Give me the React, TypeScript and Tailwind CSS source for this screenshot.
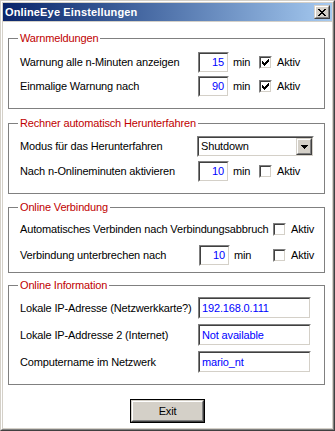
import React from "react";

function Sunken({ className = "", children }: { className?: string; children?: React.ReactNode }) {
  return (
    <div className={`flex border border-[#808080] border-r-white border-b-white ${className}`}>
      <div className="flex flex-1 items-center border border-[#404040] border-r-[#d4d0c8] border-b-[#d4d0c8] bg-white min-w-0">
        {children}
      </div>
    </div>
  );
}

function Raised({ className = "", children }: { className?: string; children?: React.ReactNode }) {
  return (
    <div className={`flex border border-[#d4d0c8] border-r-[#404040] border-b-[#404040] ${className}`}>
      <div className="flex flex-1 items-center justify-center border border-white border-r-[#808080] border-b-[#808080] bg-[#d4d0c8]">
        {children}
      </div>
    </div>
  );
}

function Check({ on }: { on?: boolean }) {
  return (
    <Sunken className="w-[13px] h-[13px] shrink-0">
      {on && (
        <svg width="7" height="7" viewBox="0 0 7 7" className="ml-[1px]" shapeRendering="crispEdges">
          <path
            fill="#000"
            d="M6 0h1v1H6z M5 1h2v1H5z M0 2h1v1H0z M4 2h3v1H4z M0 3h2v1H0z M3 3h3v1H3z M0 4h5v1H0z M1 5h3v1H1z M2 6h1v1H2z"
          />
        </svg>
      )}
    </Sunken>
  );
}

function Num({ v }: { v: string }) {
  return (
    <Sunken className="w-[31px] h-[21px] shrink-0">
      <span className="w-full text-right pr-[3px] text-[#0000ff]">{v}</span>
    </Sunken>
  );
}

function Group({ title, className = "", children }: { title: string; className?: string; children: React.ReactNode }) {
  return (
    <div className={`relative ml-[5px] w-[317px] border border-[#808080] flex flex-col pl-[11px] ${className}`}>
      <span className="absolute -top-[8px] left-[9px] bg-white px-[2px] leading-[14px] text-[#c00000]">{title}</span>
      {children}
    </div>
  );
}

function MinRow({ label, v, on, lw = "w-[178px]", mw = "w-[30px]" }: { label: string; v: string; on?: boolean; lw?: string; mw?: string }) {
  return (
    <div className="flex items-center h-[21px]">
      <span className={`${lw} shrink-0 whitespace-nowrap`}>{label}</span>
      <Num v={v} />
      <span className={`${mw} pl-[4px] shrink-0`}>min</span>
      <Check on={on} />
      <span className="pl-[5px]">Aktiv</span>
    </div>
  );
}

function Field({ label, v }: { label: string; v: string }) {
  return (
    <div className="flex items-center h-[22px]">
      <span className="w-[178px] shrink-0 whitespace-nowrap">{label}</span>
      <Sunken className="w-[113px] h-[22px]">
        <span className="pl-[2px] text-[#0000ff] whitespace-nowrap">{v}</span>
      </Sunken>
    </div>
  );
}

export default function App() {
  return (
    <div className="w-[335px] h-[431px] border border-[#d4d0c8] border-r-[#404040] border-b-[#404040] font-['Liberation_Sans',Arial,sans-serif] text-[11px] tracking-[-0.15px] text-black">
      <div className="h-full flex flex-col border border-white border-r-[#808080] border-b-[#808080] bg-[#d4d0c8] p-[1px]">
        <div className="h-[18px] shrink-0 flex items-center justify-between bg-linear-to-r from-[#0a246a] to-[#a6caf0] pl-[2px] pr-[2px]">
          <span className="text-white font-bold text-[11px] tracking-[0.15px] leading-none">OnlineEye Einstellungen</span>
          <Raised className="w-[16px] h-[14px]">
            <svg width="8" height="7" viewBox="0 0 8 7" shapeRendering="crispEdges">
              <path
                fill="#000"
                d="M0 0h2v1H0z M6 0h2v1H6z M1 1h2v1H1z M5 1h2v1H5z M2 2h4v1H2z M3 3h2v1H3z M2 4h4v1H2z M1 5h2v1H1z M5 5h2v1H5z M0 6h2v1H0z M6 6h2v1H6z"
              />
            </svg>
          </Raised>
        </div>
        <div className="mt-[1px] flex-1 bg-white flex flex-col">
          <Group title="Warnmeldungen" className="mt-[16px] h-[71px] pt-[13px] gap-[3px]">
            <MinRow label="Warnung alle n-Minuten anzeigen" v="15" on />
            <MinRow label="Einmalige Warnung nach" v="90" on />
          </Group>

          <Group title="Rechner automatisch Herunterfahren" className="mt-[14px] h-[71px] pt-[12px] gap-[4px]">
            <div className="flex items-center h-[21px]">
              <span className="w-[177px] shrink-0">Modus für das Herunterfahren</span>
              <Sunken className="w-[117px] h-[21px]">
                <span className="flex-1 pl-[2px]">Shutdown</span>
                <Raised className="w-[16px] h-full">
                  <svg width="7" height="4" viewBox="0 0 7 4" shapeRendering="crispEdges">
                    <path fill="#000" d="M0 0h7v1H0z M1 1h5v1H1z M2 2h3v1H2z M3 3h1v1H3z" />
                  </svg>
                </Raised>
              </Sunken>
            </div>
            <MinRow label="Nach n-Onlineminuten aktivieren" v="10" />
          </Group>

          <Group title="Online Verbindung" className="mt-[13px] h-[66px] pt-[11px] gap-[5px]">
            <div className="flex items-center h-[21px]">
              <span className="w-[253px] shrink-0 whitespace-nowrap">Automatisches Verbinden nach Verbindungsabbruch</span>
              <Check />
              <span className="pl-[5px]">Aktiv</span>
            </div>
            <MinRow label="Verbindung unterbrechen nach" v="10" lw="w-[179px]" mw="w-[43px]" />
          </Group>

          <Group title="Online Information" className="mt-[12px] h-[100px] pt-[11px] gap-[5px]">
            <Field label="Lokale IP-Adresse (Netzwerkkarte?)" v="192.168.0.111" />
            <Field label="Lokale IP-Addresse 2 (Internet)" v="Not available" />
            <Field label="Computername im Netzwerk" v="mario_nt" />
          </Group>

          <div className="mt-[14px] flex justify-center">
            <div className="w-[75px] h-[24px] border border-black flex">
              <Raised className="flex-1">
                <span>Exit</span>
              </Raised>
            </div>
          </div>
        </div>
      </div>
    </div>
  );
}
